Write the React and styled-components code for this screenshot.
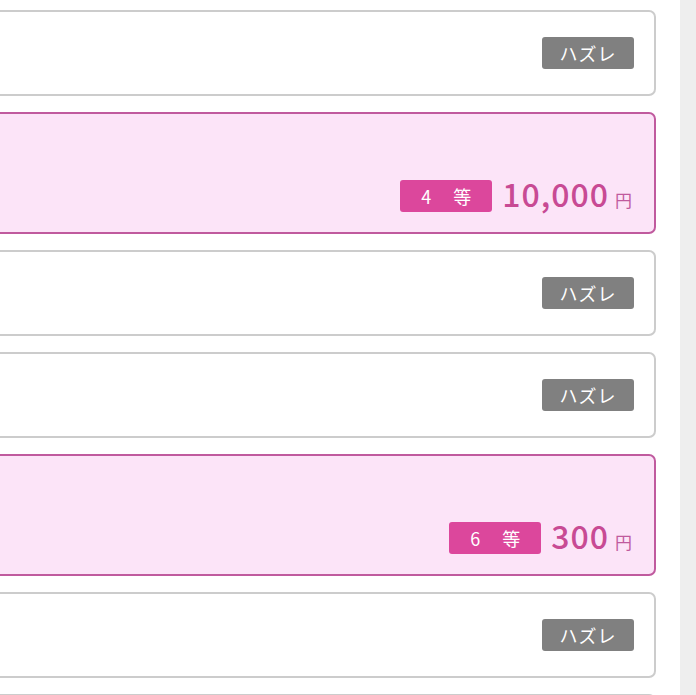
import React from 'react'
import styled, { createGlobalStyle } from 'styled-components'

const GlobalStyle = createGlobalStyle`
  html, body {
    margin: 0;
    padding: 0;
    background: #fff;
    overflow: hidden;
  }
  body {
    font-family: "Noto Sans CJK JP", "Noto Sans", sans-serif;
  }
`

const Page = styled.div`
  display: flex;
  height: 695px;
  width: 696px;
  overflow: hidden;
`

const List = styled.div`
  flex: 1;
  display: flex;
  flex-direction: column;
  gap: 16px;
  padding: 10px 24px 0 0;
  margin-left: -40px;
`

const ScrollTrack = styled.div`
  width: 16px;
  flex-shrink: 0;
  background: #eeeeee;
`

const Card = styled.div`
  box-sizing: border-box;
  height: ${p => (p.$win ? '122px' : '86px')};
  flex-shrink: 0;
  border: 2px solid ${p => (p.$win ? '#c05a9e' : '#cccccc')};
  border-radius: 7px;
  background: ${p => (p.$win ? '#fce4f8' : '#ffffff')};
  display: flex;
  justify-content: flex-end;
  align-items: ${p => (p.$win ? 'flex-end' : 'center')};
  padding: ${p => (p.$win ? '0 22px 20px 0' : '0 20px 0 0')};
`

const Badge = styled.span`
  box-sizing: border-box;
  width: 92px;
  height: 32px;
  border-radius: 3px;
  background: ${p => (p.$win ? '#dc479c' : '#808080')};
  color: #fff;
  font-size: 18px;
  display: flex;
  align-items: center;
  justify-content: center;
  letter-spacing: ${p => (p.$win ? '0' : '1px')};
  white-space: pre;
`

const Prize = styled.div`
  display: flex;
  align-items: baseline;
  margin-left: 10px;
  color: #c84a94;
`

const Amount = styled.span`
  font-size: 32px;
  font-weight: 500;
  line-height: 32px;
  letter-spacing: 1px;
`

const Yen = styled.span`
  font-size: 17px;
  margin-left: 6px;
  color: #c05a9e;
`

const rows = [
  { win: false },
  { win: true, rank: '4', amount: '10,000' },
  { win: false },
  { win: false },
  { win: true, rank: '6', amount: '300' },
  { win: false },
  { win: false, hidden: true },
]

export default function App() {
  return (
    <>
      <GlobalStyle />
      <Page>
        <List>
          {rows.map((r, i) =>
            r.win ? (
              <Card key={i} $win>
                <Badge $win>{`${r.rank}　 等`}</Badge>
                <Prize>
                  <Amount>{r.amount}</Amount>
                  <Yen>円</Yen>
                </Prize>
              </Card>
            ) : (
              <Card key={i}>{!r.hidden && <Badge>ハズレ</Badge>}</Card>
            )
          )}
        </List>
        <ScrollTrack />
      </Page>
    </>
  )
}
